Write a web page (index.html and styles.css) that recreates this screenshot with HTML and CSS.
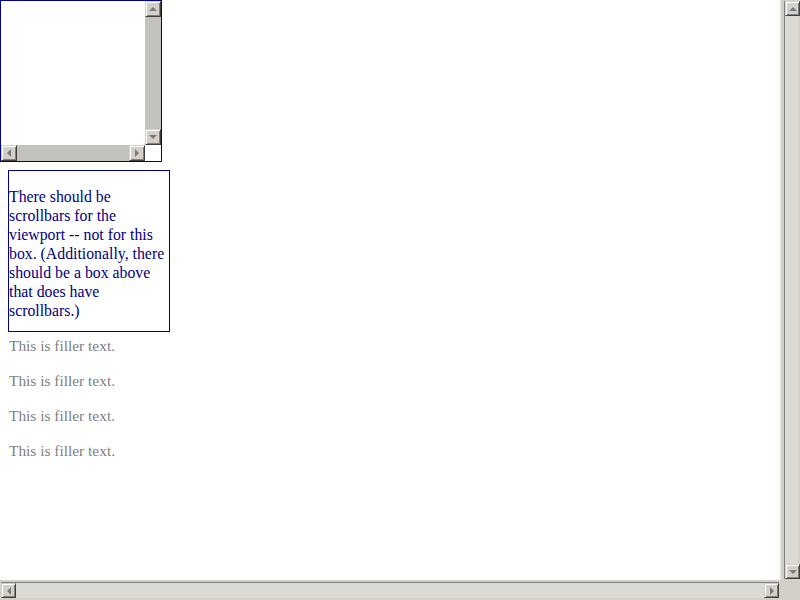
FILE: index.html
```html
<!DOCTYPE html>
<html>
<head>
<meta charset="utf-8">
<link rel="stylesheet" href="styles.css">
</head>
<body>
<div class="viewport">
  <div class="page">
    <div class="scrollbox">
      <div class="sb-content"></div>
      <div class="bar vbar small">
        <div class="btn"><span class="arrow up"></span></div>
        <div class="track"></div>
        <div class="btn"><span class="arrow down"></span></div>
      </div>
      <div class="bar hbar small">
        <div class="btn"><span class="arrow left"></span></div>
        <div class="track"></div>
        <div class="btn"><span class="arrow right"></span></div>
      </div>
      <div class="sb-corner"></div>
    </div>
    <div class="content">
      <div class="box">There should be scrollbars for the viewport -- not for this box. (Additionally, there should be a box above that does have scrollbars.)</div>
      <p class="filler first">This is filler text.</p>
      <p class="filler">This is filler text.</p>
      <p class="filler">This is filler text.</p>
      <p class="filler">This is filler text.</p>
    </div>
  </div>
  <div class="vcell">
    <div class="bar vbar big">
      <div class="btn"><span class="arrow up"></span></div>
      <div class="track"></div>
      <div class="btn"><span class="arrow down"></span></div>
    </div>
  </div>
  <div class="hcell">
    <div class="bar hbar big">
      <div class="btn"><span class="arrow left"></span></div>
      <div class="track"></div>
      <div class="btn"><span class="arrow right"></span></div>
    </div>
  </div>
  <div class="vp-corner"></div>
</div>
</body>
</html>
```
FILE: styles.css
```css
html, body {
  margin: 0;
  padding: 0;
  background: #ffffff;
}
body {
  font-family: "Liberation Serif", "Times New Roman", serif;
  font-size: 15.4px;
  line-height: 19px;
}
.viewport {
  width: 800px;
  height: 600px;
  display: grid;
  grid-template-columns: 780px 20px;
  grid-template-rows: 580px 20px;
  overflow: hidden;
}
.page {
  overflow: hidden;
  background: #ffffff;
}
.scrollbox {
  width: 160px;
  height: 160px;
  border: 1px solid #000080;
  display: grid;
  grid-template-columns: 144px 16px;
  grid-template-rows: 144px 16px;
  background: #ffffff;
}
.sb-corner { background: #ffffff; }
.bar {
  display: flex;
  box-sizing: border-box;
}
.vbar { flex-direction: column; }
.hbar { flex-direction: row; }
.bar .track { flex: 1; }
.small .track { background: #c3c2be; }
.big .track { background: #dcdad5; }
.btn {
  width: 16px;
  height: 16px;
  box-sizing: border-box;
  background: #d4d0c8;
  border: 1px solid;
  border-color: #d4d0c8 #404040 #404040 #d4d0c8;
  box-shadow: inset 1px 1px #ffffff, inset -1px -1px #808080;
  display: flex;
  align-items: center;
  justify-content: center;
  flex: none;
}
.big .btn { width: 15px; height: 15px; }
.arrow {
  width: 0;
  height: 0;
  border-style: solid;
  border-color: transparent;
}
.arrow.up { border-width: 0 4px 4px 4px; border-bottom-color: #7a7a7a; }
.arrow.down { border-width: 4px 4px 0 4px; border-top-color: #7a7a7a; }
.arrow.left { border-width: 4px 4px 4px 0; border-right-color: #7a7a7a; }
.arrow.right { border-width: 4px 0 4px 4px; border-left-color: #7a7a7a; }

.content { padding: 8px 0 0 8px; }
.box {
  box-sizing: border-box;
  width: 162px;
  height: 162px;
  border: 1px solid #000080;
  padding-top: 16px;
  color: #000080;
  font-size: 15.8px;
}
.filler {
  color: #808080;
  margin: 16px 0 0 1px;
}
.filler.first { margin-top: 4px; }

.vcell {
  background: #d4d0c8;
  padding: 1px 2px 1px 3px;
  box-sizing: border-box;
  border-left: 1px solid #e6e4df;
}
.vcell .vbar { height: 100%; border-left: 1px solid #808080; }
.hcell {
  background: #d4d0c8;
  padding: 2px 1px 2px 1px;
  box-sizing: border-box;
}
.hcell .hbar { width: 100%; height: 16px; border-top: 1px solid #808080; }
.vp-corner { background: #d4d0c8; }
```
